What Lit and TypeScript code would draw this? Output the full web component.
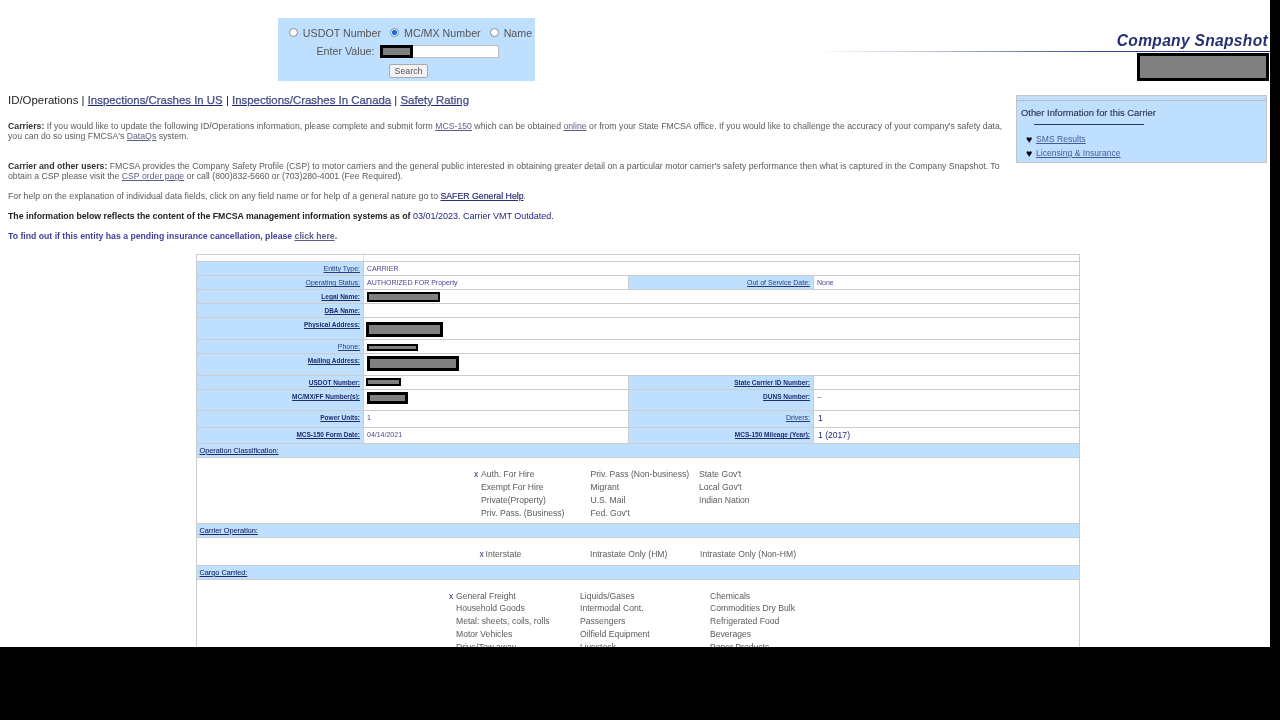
import { LitElement, html, css } from "lit";
import { customElement } from "lit/decorators.js";

type Cell = { l: string; v?: unknown; b?: boolean };
type Row = { h: number; a: Cell; c?: Cell };

const redact = (w: number, h: number, b = 2, dx = 0, dy = 0) =>
  html`<span class="red" style="width:${w}px;height:${h}px;border-width:${b}px;margin-left:${dx}px;margin-top:${dy}px"></span>`;

const rows: Row[] = [
  { h: 13, a: { l: "Entity Type:", v: "CARRIER" } },
  { h: 13, a: { l: "Operating Status:", v: "AUTHORIZED FOR Property" }, c: { l: "Out of Service Date:", v: "None" } },
  { h: 13, a: { l: "Legal Name:", b: true, v: redact(73, 10) } },
  { h: 13, a: { l: "DBA Name:", b: true, v: "" } },
  { h: 21, a: { l: "Physical Address:", b: true, v: redact(77, 15, 3, -1, 2) } },
  { h: 13, a: { l: "Phone:", v: redact(51, 7, 2, 0, 2) } },
  { h: 21, a: { l: "Mailing Address:", b: true, v: redact(92, 15, 3) } },
  { h: 13, a: { l: "USDOT Number:", b: true, v: redact(35, 8, 2, -1) }, c: { l: "State Carrier ID Number:", b: true, v: "" } },
  { h: 20, a: { l: "MC/MX/FF Number(s):", b: true, v: redact(41, 12, 3) }, c: { l: "DUNS Number:", b: true, v: "--" } },
  { h: 16, a: { l: "Power Units:", b: true, v: "1" }, c: { l: "Drivers:", v: html`<span class="big">1</span>` } },
  { h: 15, a: { l: "MCS-150 Form Date:", b: true, v: "04/14/2021" }, c: { l: "MCS-150 Mileage (Year):", b: true, v: html`<span class="big">1 (2017)</span>` } },
];

const opClass = [
  ["x", "Auth. For Hire", "Priv. Pass (Non-business)", "State Gov't"],
  ["", "Exempt For Hire", "Migrant", "Local Gov't"],
  ["", "Private(Property)", "U.S. Mail", "Indian Nation"],
  ["", "Priv. Pass. (Business)", "Fed. Gov't", ""],
];
const carrierOp = [["x", "Interstate", "Intrastate Only (HM)", "Intrastate Only (Non-HM)"]];
const cargo = [
  ["x", "General Freight", "Liquids/Gases", "Chemicals"],
  ["", "Household Goods", "Intermodal Cont.", "Commodities Dry Bulk"],
  ["", "Metal: sheets, coils, rolls", "Passengers", "Refrigerated Food"],
  ["", "Motor Vehicles", "Oilfield Equipment", "Beverages"],
  ["", "Drive/Tow away", "Livestock", "Paper Products"],
];

@customElement("app-root")
export class AppRoot extends LitElement {
  static styles = css`
    :host {
      display: block;
      width: 1280px;
      height: 720px;
      background: #000;
      overflow: hidden;
      font-family: "Liberation Sans", Arial, sans-serif;
    }
    * { box-sizing: border-box; }
    .viewport {
      width: 1270px;
      height: 647px;
      background: #fff;
      overflow: hidden;
      filter: blur(0.3px);
    }
    .top { display: flex; justify-content: space-between; height: 81px; }
    .search {
      margin: 18px 0 0 278px;
      width: 257px;
      height: 63px;
      background: #bfdfff;
      display: flex;
      flex-direction: column;
      align-items: center;
      color: #555;
      font-size: 10.7px;
    }
    .radios { display: flex; align-items: center; height: 15px; margin-top: 7px; padding-left: 8px; white-space: nowrap; }
    .radios input {
      appearance: none;
      -webkit-appearance: none;
      width: 9px;
      height: 9px;
      margin: 0 5px 0 0;
      border: 1px solid #8a8a8a;
      border-radius: 50%;
      background: #fff;
    }
    .radios input:checked { background: radial-gradient(circle, #1a6fd8 0 2.4px, #fff 2.9px); border-color: #6f8fb8; }
    .radios label { display: flex; align-items: center; margin-right: 9px; }
    .radios label:last-child { margin-right: 0; }
    .val { display: flex; align-items: center; height: 14px; margin-top: 4px; margin-left: 2px; }
    .field { margin-left: 5px; width: 119px; height: 13px; background: #fff; border: 1px solid #bbb; display: flex; position: relative; }
    .field .red { width: 33px; height: 13px; margin: -1px 0 0 -1px; border-width: 3px; }
    .btn { margin: 6px 0 0 4px; width: 39px; height: 14px; font-size: 8.8px; color: #555; background: #f3f3f3; border: 1px solid #aaa; border-radius: 2px; display: flex; align-items: center; justify-content: center; }
    .brand { width: 455px; padding-top: 34px; display: flex; flex-direction: column; align-items: flex-end; }
    .title { font-size: 15.6px; line-height: 14px; height: 17px; font-weight: bold; font-style: italic; color: #24306f; padding-right: 2px; white-space: nowrap; letter-spacing: 0.3px; }
    .rule { width: 100%; height: 1px; background: linear-gradient(90deg, #fff 0%, #bcc4e0 25%, #3f4e96 60%, #1a2770 100%); }
    .idbox { width: 132px; height: 28px; margin: 1px 1px 0 0; background: #808080; border: 3px solid #000; flex: none; }
    .content { display: flex; margin-top: 14px; height: 159px; }
    .main { width: 1016px; padding-left: 8px; font-size: 8.75px; line-height: 10px; color: #5b5b5b; white-space: nowrap; }
    .tabs { height: 12px; line-height: 11px; font-size: 11.42px; color: #222; margin-bottom: 14px; white-space: nowrap; }
    .tabs a { color: #1f2a78; text-decoration: underline; -webkit-text-stroke: 0.25px #1f2a78; }
    p { margin: 0; }
    .p1 { margin-bottom: 20px; font-size: 8.71px; }
    .p2 { margin-bottom: 10px; font-size: 8.72px; }
    .p3 { margin-bottom: 10px; }
    .p4 { margin-bottom: 10px; color: #222; font-weight: bold; font-size: 8.74px; }
    .p4 span { color: #1d1d80; font-weight: 400; font-size: 9px; }
    .p5 { color: #43429c; font-weight: bold; font-size: 8.7px; }
    .p5 a { color: #2c2a78; }
    .main a { color: #5c5f8a; }
    .main .dark { color: #2a2f7c; -webkit-text-stroke: 0.2px #2a2f7c; }
    .main b { color: #333; font-weight: bold; }
    .side {
      width: 251px;
      height: 68px;
      background: #bfdfff;
      border: 1px solid #c4c4c4;
      font-size: 8.6px;
      color: #2d3650;
    }
    .sidetop { height: 5px; border-bottom: 1px solid #bcbcbc; }
    .sidehead { padding: 7px 0 0 4px; height: 23px; line-height: 10px; font-size: 9.4px; -webkit-text-stroke: 0.15px #2d3650; }
    .sideline { width: 110px; height: 1px; margin: 0 0 0 17px; background: #27336f; }
    .sidelist { margin: 9px 0 0 9px; display: flex; flex-direction: column; gap: 4px; }
    .sidelist div { display: flex; align-items: center; height: 10px; }
    .sidelist i { font-style: normal; font-size: 10.5px; color: #000; width: 10px; }
    .sidelist a { color: #465a96; text-decoration: underline; }
    .table {
      margin: 0 0 0 196px;
      width: 884px;
      background: #ccc;
      border: 1px solid #ccc;
      display: flex;
      flex-direction: column;
      gap: 1px;
      border-bottom: 0;
    }
    .thin { height: 6px; display: grid; grid-template-columns: 166px 1fr; gap: 1px; background: #e2e2e2; }
    .thin span { background: #fff; }
    .row { display: grid; grid-template-columns: 166px 1fr; gap: 1px; }
    .row.four { grid-template-columns: 166px 264px 184px 1fr; }
    .lab { background: #bfdfff; text-align: right; padding: 2px 3px 0 0; font-size: 7px; line-height: 9px; color: #2b3a7a; text-decoration: underline; white-space: nowrap; }
    .lab.b { font-weight: bold; font-size: 6.5px; color: #1f2c6e; }
    .valc { background: #fff; padding: 2px 0 0 3px; font-size: 7px; line-height: 9px; color: #4d4496; white-space: nowrap; overflow: visible; }
    .red { display: inline-block; background: #808080; border: 2px solid #000; vertical-align: top; }
    .big { font-size: 8.6px; line-height: 11px; color: #222f6e; margin-left: 1px; }
    .sec { height: 13px; background: #bfdfff; padding: 2px 0 0 2.5px; font-size: 7.3px; line-height: 9px; color: #1f2c6e; text-decoration: underline; -webkit-text-stroke: 0.1px #1f2c6e; }
    .body { background: #fff; }
    .list { display: grid; font-size: 8.6px; color: #5a5a5a; white-space: nowrap; }
    .list .m { color: #2b2b70; font-size: 8.5px; }
    .opc { height: 65px; padding: 10px 0 0 277px; grid-template-columns: 7px 109.5px 108.5px 1fr; grid-auto-rows: 13px; line-height: 13px; }
    .car { height: 27px; padding: 9.5px 0 0 282.5px; grid-template-columns: 6px 104.5px 110px 1fr; line-height: 13px; }
    .cargo { height: 100px; padding: 9.5px 0 0 252px; grid-template-columns: 7px 124px 130px 1fr; grid-auto-rows: 12.75px; line-height: 12.75px; }
  `;

  private cell(c: Cell) {
    return html`<div class="lab ${c.b ? "b" : ""}">${c.l}</div><div class="valc">${c.v}</div>`;
  }

  private list(cls: string, data: string[][]) {
    return html`<div class="body list ${cls}">
      ${data.map(
        (r) => html`<span class="m">${r[0]}</span><span>${r[1]}</span><span>${r[2]}</span><span>${r[3]}</span>`
      )}
    </div>`;
  }

  render() {
    return html`
      <div class="viewport">
        <div class="top">
          <div class="search">
            <div class="radios">
              <label><input type="radio" name="q" />USDOT Number</label>
              <label><input type="radio" name="q" checked />MC/MX Number</label>
              <label><input type="radio" name="q" />Name</label>
            </div>
            <div class="val">Enter Value:<span class="field"><span class="red"></span></span></div>
            <div class="btn">Search</div>
          </div>
          <div class="brand">
            <div class="title">Company Snapshot</div>
            <div class="rule"></div>
            <div class="idbox"></div>
          </div>
        </div>
        <div class="content">
          <div class="main">
            <div class="tabs">ID/Operations | <a>Inspections/Crashes In US</a> | <a>Inspections/Crashes In Canada</a> | <a>Safety Rating</a></div>
            <p class="p1"><b>Carriers:</b> If you would like to update the following ID/Operations information, please complete and submit form <a href="#">MCS-150</a> which can be obtained <a href="#">online</a> or from your State FMCSA office. If you would like to challenge the accuracy of your company's safety data,<br />you can do so using FMCSA's <a href="#">DataQs</a> system.</p>
            <p class="p2"><b>Carrier and other users:</b> FMCSA provides the Company Safety Profile (CSP) to motor carriers and the general public interested in obtaining greater detail on a particular motor carrier's safety performance then what is captured in the Company Snapshot. To<br />obtain a CSP please visit the <a href="#">CSP order page</a> or call (800)832-5660 or (703)280-4001 (Fee Required).</p>
            <p class="p3">For help on the explanation of individual data fields, click on any field name or for help of a general nature go to <a href="#" class="dark">SAFER General Help</a>.</p>
            <p class="p4">The information below reflects the content of the FMCSA management information systems as of <span>03/01/2023. Carrier VMT Outdated.</span></p>
            <p class="p5">To find out if this entity has a pending insurance cancellation, please <a href="#">click here</a>.</p>
          </div>
          <aside class="side">
            <div class="sidetop"></div>
            <div class="sidehead">Other Information for this Carrier</div>
            <div class="sideline"></div>
            <div class="sidelist">
              <div><i>♥</i><a>SMS Results</a></div>
              <div><i>♥</i><a>Licensing &amp; Insurance</a></div>
            </div>
          </aside>
        </div>
        <div class="table">
          <div class="thin"><span></span><span></span></div>
          ${rows.map(
            (r) => html`<div class="row ${r.c ? "four" : ""}" style="height:${r.h}px">
              ${this.cell(r.a)}${r.c ? this.cell(r.c) : ""}
            </div>`
          )}
          <div class="sec">Operation Classification:</div>
          ${this.list("opc", opClass)}
          <div class="sec">Carrier Operation:</div>
          ${this.list("car", carrierOp)}
          <div class="sec">Cargo Carried:</div>
          ${this.list("cargo", cargo)}
        </div>
      </div>
    `;
  }
}
